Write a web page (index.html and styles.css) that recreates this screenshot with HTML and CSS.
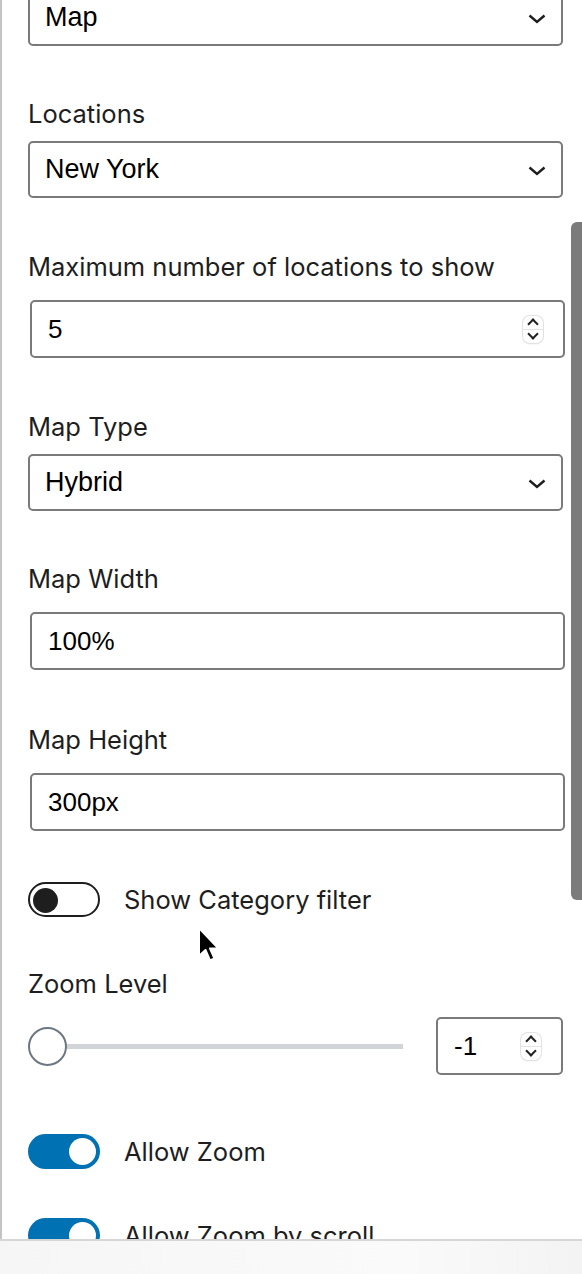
FILE: index.html
```html
<!DOCTYPE html>
<html>
<head>
<meta charset="utf-8">
<link rel="stylesheet" href="styles.css">
</head>
<body>
<div class="panel">
  <div class="select first">
    <span class="value">Map</span>
    <svg class="chev" width="18" height="10" viewBox="0 0 18 10"><polyline points="1.5,1.5 9,8 16.5,1.5" fill="none" stroke="#1e1e1e" stroke-width="2.4"/></svg>
  </div>

  <div class="label lbl-sel l-loc">Locations</div>
  <div class="select">
    <span class="value">New York</span>
    <svg class="chev" width="18" height="10" viewBox="0 0 18 10"><polyline points="1.5,1.5 9,8 16.5,1.5" fill="none" stroke="#1e1e1e" stroke-width="2.4"/></svg>
  </div>

  <div class="label lbl-inp l-max">Maximum number of locations to show</div>
  <div class="input">
    <span class="value">5</span>
    <span class="spin"><span class="up"></span><span class="dn"></span></span>
  </div>

  <div class="label lbl-sel l-type">Map Type</div>
  <div class="select">
    <span class="value">Hybrid</span>
    <svg class="chev" width="18" height="10" viewBox="0 0 18 10"><polyline points="1.5,1.5 9,8 16.5,1.5" fill="none" stroke="#1e1e1e" stroke-width="2.4"/></svg>
  </div>

  <div class="label lbl-inp">Map Width</div>
  <div class="input"><span class="value">100%</span></div>

  <div class="label lbl-inp l-height">Map Height</div>
  <div class="input"><span class="value">300px</span></div>

  <div class="toggle-row first-toggle">
    <span class="toggle off"><span class="knob"></span></span>
    <span class="tlabel">Show Category filter</span>
  </div>

  <div class="label lbl-inp zoom-label">Zoom Level</div>
  <div class="range-row">
    <div class="range">
      <span class="thumb"></span>
      <span class="track"></span>
    </div>
    <div class="input small">
      <span class="value">-1</span>
      <span class="spin"><span class="up"></span><span class="dn"></span></span>
    </div>
  </div>

  <div class="toggle-row on-row">
    <span class="toggle on"><span class="knob"></span></span>
    <span class="tlabel">Allow Zoom</span>
  </div>
  <div class="toggle-row on-row second">
    <span class="toggle on"><span class="knob"></span></span>
    <span class="tlabel">Allow Zoom by scroll</span>
  </div>
</div>

<div class="scrollbar"></div>
<div class="bottombar"></div>

<svg class="cursor" width="26" height="40" viewBox="0 0 26 40">
  <path d="M2 2 L2 30 L8.5 24 L13 34.5 L17.5 32.5 L13 22.5 L21.5 22.5 Z" fill="#000" stroke="#fff" stroke-width="2" stroke-linejoin="round"/>
</svg>
</body>
</html>
```

FILE: styles.css
```css
html, body {
  margin: 0;
  padding: 0;
  background: #fff;
}
body {
  width: 582px;
  height: 1274px;
  overflow: hidden;
  position: relative;
  font-family: Inter, "Liberation Sans", sans-serif;
  color: #1e1e1e;
}
.panel {
  border-left: 2px solid #c4c4c4;
  margin-top: -11px;
  padding: 0 19px 0 26px;
  height: 1320px;
  display: flex;
  flex-direction: column;
  box-sizing: border-box;
}
.label {
  font-size: 25.5px;
  line-height: 32px;
  height: 32px;
  margin-top: 52px;
}
.l-loc { margin-top: 52px; }
.l-max { margin-top: 53px; }
.l-type { margin-top: 53px; }
.l-height { margin-top: 54px; }
.lbl-sel + .select { margin-top: 11px; }
.lbl-inp + .input { margin-top: 17px; }
.lbl-inp + .range-row { margin-top: 17px; }
.select, .input {
  box-sizing: border-box;
  border: 2px solid #7a7a7a;
  border-radius: 5px;
  height: 57px;
  display: flex;
  align-items: center;
  font-family: "Liberation Sans", Arial, sans-serif;
  font-size: 27px;
  color: #000;
  position: relative;
}
.select {
  padding: 0 15px 0 15px;
  justify-content: space-between;
}
.input {
  height: 58px;
  margin-left: 2px;
  margin-right: -2px;
  padding: 0 16px;
  justify-content: space-between;
  font-size: 26px;
}
.chev { display: block; margin-top: 2px; }
.spin {
  width: 20px;
  height: 27px;
  border-radius: 7px;
  box-shadow: 0 0 0 1px #e2e2e2, 0 1px 2px rgba(0,0,0,0.12);
  display: flex;
  flex-direction: column;
  margin-right: 4px;
  background: #fff;
}
.spin .up, .spin .dn {
  flex: 1;
  position: relative;
}
.spin .up { border-bottom: 1px solid #e4e4e4; }
.spin .up::after, .spin .dn::after {
  content: "";
  position: absolute;
  left: 6px;
  width: 6px;
  height: 6px;
  border-left: 2px solid #222;
  border-top: 2px solid #222;
}
.spin .up::after { top: 4px; transform: rotate(45deg); }
.spin .dn::after { top: 0px; transform: rotate(225deg); }

.toggle-row {
  display: flex;
  align-items: center;
  height: 35px;
  gap: 24px;
}
.first-toggle { margin-top: 51px; }
.zoom-label { margin-top: 51px; }
.toggle {
  box-sizing: border-box;
  width: 72px;
  height: 35px;
  border-radius: 18px;
  position: relative;
  flex: none;
}
.toggle.off { border: 2px solid #1e1e1e; background: #fff; }
.toggle.off .knob {
  position: absolute;
  left: 3px;
  top: 3.5px;
  width: 25px;
  height: 25px;
  border-radius: 50%;
  background: #1e1e1e;
}
.toggle.on { background: #0071b3; }
.toggle.on .knob {
  position: absolute;
  right: 4px;
  top: 4px;
  width: 27px;
  height: 27px;
  border-radius: 50%;
  background: #fff;
}
.tlabel {
  font-size: 25.5px;
  line-height: 32px;
}
.range-row {
  display: flex;
  align-items: center;
  gap: 33px;
}
.range {
  width: 375px;
  height: 58px;
  display: flex;
  align-items: center;
}
.thumb {
  box-sizing: border-box;
  width: 39px;
  height: 39px;
  border-radius: 50%;
  border: 2px solid #6c7781;
  background: #fff;
  flex: none;
}
.track {
  flex: 1;
  height: 5px;
  background: #d1d5d9;
}
.input.small {
  width: 127px;
  margin-left: 0;
  margin-right: 0;
  padding-right: 16px;
}
.on-row { margin-top: 59px; }
.on-row.second { margin-top: 49px; }

.scrollbar {
  position: absolute;
  left: 571px;
  top: 222px;
  width: 12px;
  height: 678px;
  background: #7b7b7b;
  border-radius: 6px 0 0 6px;
}
.bottombar {
  position: absolute;
  left: 0;
  top: 1239px;
  width: 582px;
  height: 35px;
  border-top: 2px solid #d6d6d6;
  background: linear-gradient(90deg, #f6f6f6, #fafafa 70%, #f3f3f3);
  box-sizing: border-box;
}
.cursor {
  position: absolute;
  left: 197px;
  top: 926px;
}
```
